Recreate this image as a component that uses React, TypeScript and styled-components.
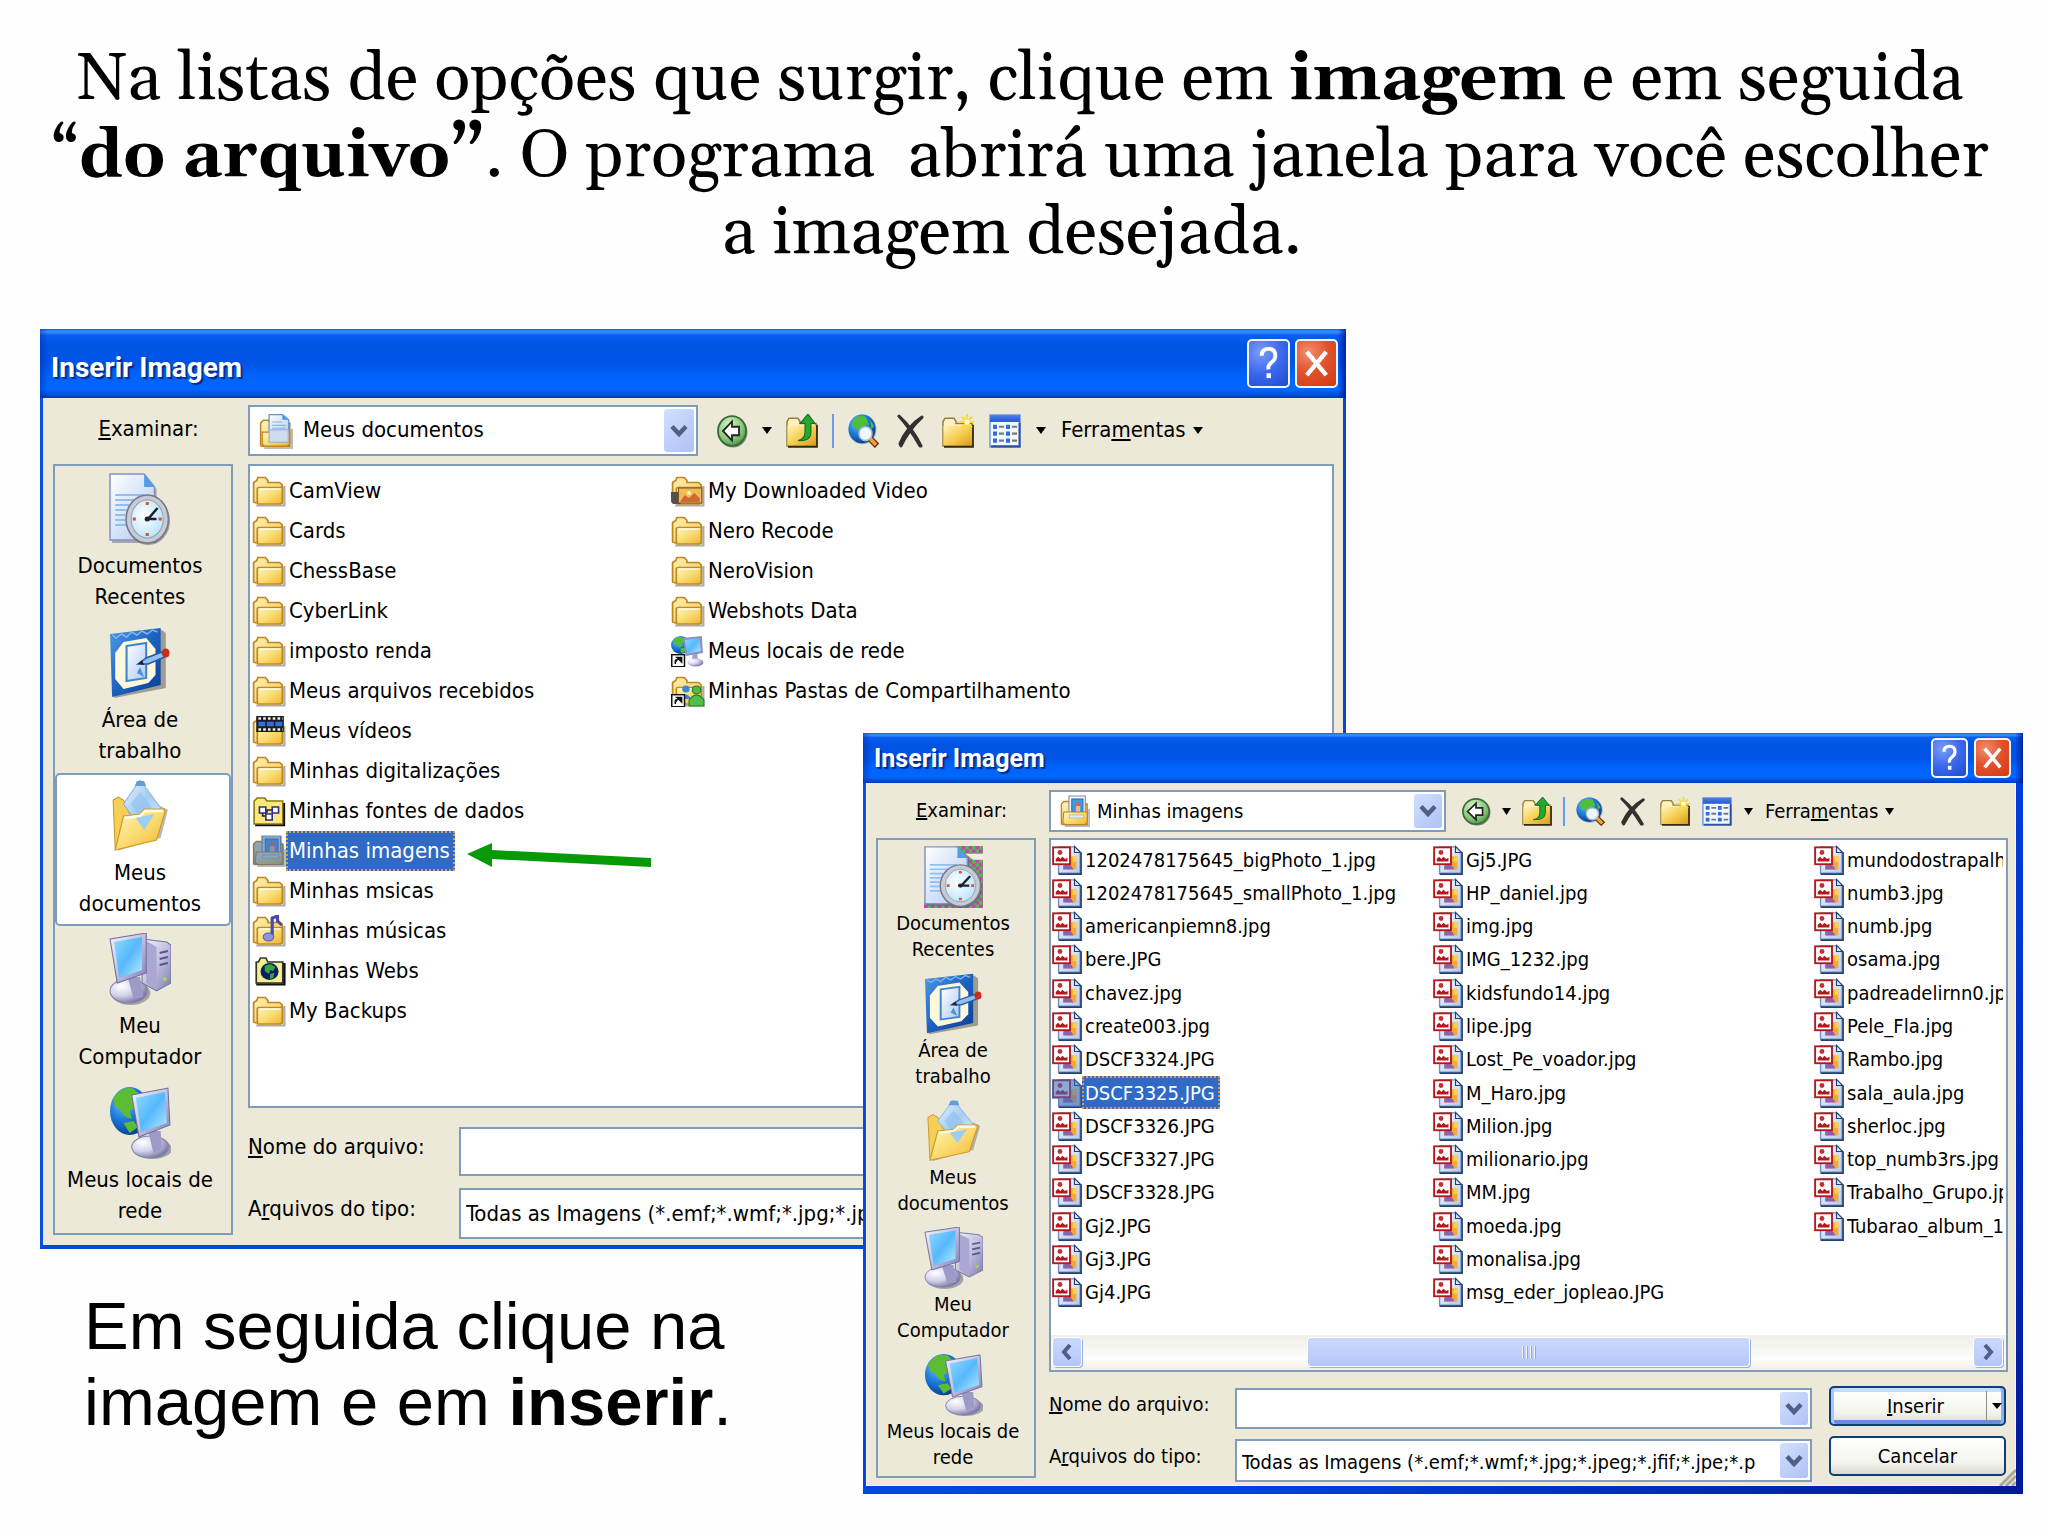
import React, { useId } from 'react';
import styled, { createGlobalStyle, ThemeProvider, css } from 'styled-components';

/* ---------- metrics of the two dialog sizes ---------- */

const large = {
  font: 22, titleFont: 28, titleBar: 69, titlePad: 8, titleLeft: 8,
  capW: 43, capH: 49, capGap: 5, capRight: 5,
  borderRight: 3, borderBottom: 4, edge: '#0a43d6', bottomEdge: '#0844d6',
  bodyPad: '7px 9px 6px 10px', side: 180, colGap: 15, rowGap: 8,
  comboW: 450, comboH: 51, comboIconW: 34, comboIconH: 36, comboTextGap: 10, dropW: 30,
  toolsLeft: 18, toolW: 32, toolH: 34, gapA: 14, gapB: 15, caret: 10,
  placeIconW: 62, placeIconH: 72, placeGap: 5, placeLine: 31,
  listH: 644, listPad: '5px 2px', listRows: 'repeat(14, 40px)', column: 419,
  fileIconW: 34, fileIconH: 32,
  footTop: 19, footLabel: 211, inputH: 49, selectH: 51, footGap: 12, footCol: 20,
  actionsW: 200, buttonH: 47,
};

const compact: typeof large = {
  font: 20, titleFont: 25, titleBar: 50, titlePad: 2, titleLeft: 8,
  capW: 37, capH: 40, capGap: 6, capRight: 5,
  borderRight: 7, borderBottom: 8, edge: '#0038dc', bottomEdge: '#0038dc',
  bodyPad: '7px 8px 4px 10px', side: 160, colGap: 13, rowGap: 6,
  comboW: 397, comboH: 42, comboIconW: 30, comboIconH: 32, comboTextGap: 7, dropW: 28,
  toolsLeft: 15, toolW: 30, toolH: 29, gapA: 11, gapB: 12, caret: 9,
  placeIconW: 59, placeIconH: 62, placeGap: 2, placeLine: 26,
  listH: 534, listPad: '3px 3px 26px 1px', listRows: 'repeat(14, 1fr)', column: 381,
  fileIconW: 30, fileIconH: 30,
  footTop: 16, footLabel: 186, inputH: 41, selectH: 43, footGap: 10, footCol: 17,
  actionsW: 177, buttonH: 40,
};

type Metrics = typeof large;
const m = (pick: (t: Metrics) => string | number) => (p: { theme: any }) => pick(p.theme as Metrics);

const uiFont = '"DejaVu Sans Condensed", "DejaVu Sans", sans-serif';

const Global = createGlobalStyle`
  * { box-sizing: border-box; }
  body { margin: 0; background: #fefefe; color: #000; }
  button, input, select { font: inherit; color: inherit; }
`;

/* ---------- slide ---------- */

const Slide = styled.main`
  padding: 41px 0 71px;
  overflow: hidden;
`;

const Heading = styled.h1`
  margin: 0;
  padding-right: 8px;
  font: 400 67px/77px Gelasio, Georgia, "Liberation Serif", serif;
  text-align: center;
  white-space: nowrap;
`;

const Desktop = styled.div`
  position: relative;
  margin-top: 57px;
`;

const Caption = styled.p`
  margin: 39px 0 0 84px;
  font: 400 67px/76px "Liberation Sans", Arial, sans-serif;
`;

const Pointer = styled.svg`
  position: absolute;
  left: 467px;
  top: 510px;
  width: 184px;
  height: 34px;
`;

/* ---------- dialog frame ---------- */

const Frame = styled.section<{ $front?: boolean }>`
  display: flex;
  flex-direction: column;
  font: 400 ${m(t => t.font)}px/1.2 ${uiFont};
  background: #ece9d8;
  border-style: solid;
  border-width: 0 ${m(t => t.borderRight)}px ${m(t => t.borderBottom)}px 3px;
  border-color: ${m(t => t.edge)} ${m(t => t.edge)} ${m(t => t.bottomEdge)} #0a50dc;
  ${p => p.$front ? css`
    position: absolute;
    top: 404px;
    left: 42.14%;
    width: 56.64%;
    box-shadow: inset -1px -1px 0 #f6f4ea, inset 1px 0 0 #f6f4ea;
    border-image: linear-gradient(135deg, #0a50e6, #0040e4 60%, #00199c) 1;
    border-image-width: 0 7px 8px 3px;
  ` : css`
    margin-left: 40px;
    width: 63.77%;
  `}
`;

const TitleBar = styled.header`
  display: flex;
  align-items: center;
  gap: ${m(t => t.capGap)}px;
  height: ${m(t => t.titleBar)}px;
  margin: 0 -${m(t => t.borderRight)}px 0 -3px;
  padding: 0 ${m(t => t.capRight + t.borderRight)}px 0 ${m(t => t.titleLeft + 3)}px;
  background:
    linear-gradient(90deg, rgba(0, 40, 170, .45), transparent 8px, transparent calc(100% - 8px), rgba(0, 20, 150, .8)),
    linear-gradient(180deg, #0a62e8 0, #3c93ff 4%, #0a5ff0 9%, #0054e3 22%, #0055e6 52%, #0062fb 66%, #0067ff 88%, #0049d8 96%, #0038b8 100%);
`;

const Title = styled.h2`
  flex: 1;
  margin: 0;
  padding-top: ${m(t => t.titlePad)}px;
  font: 700 ${m(t => t.titleFont)}px/1.2 Roboto, "Liberation Sans", sans-serif;
  color: #fff;
  text-shadow: 2px 2px 1px #0a2a8c;
`;

const CaptionButton = styled.button<{ $close?: boolean }>`
  width: ${m(t => t.capW)}px;
  height: ${m(t => t.capH)}px;
  padding: 0;
  border: 2px solid #f2f6ff;
  border-radius: 5px;
  background: ${p => p.$close
    ? 'radial-gradient(circle at 30% 25%, #f0906e, #e2522e 45%, #d23a10 100%)'
    : 'radial-gradient(circle at 30% 25%, #7c9cf8, #3a68ec 50%, #1f4ad0 100%)'};
  svg { display: block; width: 100%; height: 100%; }
`;

const Body = styled.div`
  display: grid;
  grid-template-columns: ${m(t => t.side)}px minmax(0, 1fr);
  column-gap: ${m(t => t.colGap)}px;
  row-gap: ${m(t => t.rowGap)}px;
  padding: ${m(t => t.bodyPad)};
`;

/* ---------- look-in row ---------- */

const LookInLabel = styled.label`
  align-self: center;
  padding: 0 0 3px 11px;
  text-align: center;
`;

const LookInRow = styled.div`
  display: flex;
  align-items: center;
`;

const Field = styled.div<{ $h: 'comboH' | 'inputH' | 'selectH'; $combo?: boolean }>`
  display: flex;
  align-items: center;
  flex: none;
  height: ${p => (p.theme as any)[p.$h]}px;
  ${p => p.$combo && css`width: ${(p.theme as any).comboW}px;`}
  padding: 2px;
  background: #fff;
  border: 2px solid #7f9db9;
`;

const ComboIcon = styled.span`
  display: flex;
  margin: 0 ${m(t => t.comboTextGap)}px 0 7px;
  svg { width: ${m(t => t.comboIconW)}px; height: ${m(t => t.comboIconH)}px; }
`;

const plainControl = css`
  flex: 1;
  min-width: 0;
  height: 100%;
  margin: 0;
  border: 0;
  background: transparent;
  outline: none;
`;

const Select = styled.select<{ $indent?: boolean }>`
  ${plainControl}
  appearance: none;
  padding: ${p => p.$indent ? '2px 0 0 3px' : '0'};
  overflow: hidden;
  white-space: nowrap;
`;

const TextInput = styled.input`
  ${plainControl}
  padding: 0 4px;
`;

const Drop = styled.span`
  display: flex;
  align-items: center;
  justify-content: center;
  flex: none;
  width: ${m(t => t.dropW)}px;
  height: 100%;
  border-radius: 3px;
  background: linear-gradient(135deg, #d3dffd, #bccdfa 60%, #afc2f2);
  pointer-events: none;
  svg { width: 18px; height: 16px; }
`;

const Tools = styled.div`
  display: flex;
  align-items: center;
  gap: ${m(t => t.gapA)}px;
  padding-left: ${m(t => t.toolsLeft)}px;
`;

const ToolGroup = styled.div`
  display: flex;
  align-items: center;
  gap: ${m(t => t.gapB)}px;
`;

const Tool = styled.button`
  display: flex;
  padding: 0;
  border: 0;
  background: none;
  svg { width: ${m(t => t.toolW)}px; height: ${m(t => t.toolH)}px; }
`;

const CaretButton = styled.button`
  display: flex;
  padding: 0;
  border: 0;
  background: none;
  svg { width: ${m(t => t.caret)}px; height: 7px; }
`;

const MenuButton = styled.button`
  display: flex;
  align-items: center;
  gap: 7px;
  padding: 0;
  border: 0;
  background: none;
  svg { width: ${m(t => t.caret)}px; height: 7px; }
`;

const Separator = styled.span`
  width: 2px;
  height: ${m(t => t.toolH)}px;
  background: #6a9be8;
`;

/* ---------- places ---------- */

const Places = styled.nav`
  display: flex;
  flex-direction: column;
  margin-bottom: 4px;
  border: 2px solid #7f9db9;
  font-size: ${m(t => t.font)}px;
`;

const Place = styled.button<{ $active?: boolean }>`
  display: flex;
  flex: 1;
  flex-direction: column;
  align-items: center;
  justify-content: center;
  gap: ${m(t => t.placeGap)}px;
  min-height: 0;
  padding: 0 6px 0 0;
  border: 2px solid ${p => p.$active ? '#7f9db9' : 'transparent'};
  border-radius: 5px;
  background: ${p => p.$active ? '#fff' : 'none'};
  line-height: ${m(t => t.placeLine)}px;
  white-space: pre;
  svg { width: ${m(t => t.placeIconW)}px; height: ${m(t => t.placeIconH)}px; }
`;

/* ---------- file list ---------- */

const Main = styled.div`
  display: flex;
  flex-direction: column;
  min-width: 0;
`;

const ListBox = styled.div`
  display: flex;
  flex-direction: column;
  height: ${m(t => t.listH)}px;
  border: 2px solid #7f9db9;
  background: #fff;
`;

const ListView = styled.div`
  flex: 1;
  min-height: 0;
  padding: ${m(t => t.listPad)};
`;

const Files = styled.ul`
  display: grid;
  grid-auto-flow: column;
  grid-template-rows: ${m(t => t.listRows)};
  grid-auto-columns: ${m(t => t.column)}px;
  height: 100%;
  margin: 0;
  padding: 0;
  overflow: hidden;
  list-style: none;
`;

const FileItem = styled.li`
  display: flex;
  min-height: 0;
`;

const FileButton = styled.button`
  display: flex;
  align-items: center;
  padding: 0;
  border: 0;
  background: none;
  white-space: nowrap;
  svg { flex: none; width: ${m(t => t.fileIconW)}px; height: ${m(t => t.fileIconH)}px; }
`;

const FileName = styled.span<{ $on?: boolean }>`
  display: flex;
  align-items: center;
  height: 100%;
  padding: 0 5px 0 3px;
  ${p => p.$on && css`
    color: #fff;
    background: #316ac5;
    outline: 2px dotted #d09a5a;
    outline-offset: -2px;
  `}
`;

/* ---------- scroll bar ---------- */

const ScrollBar = styled.div`
  display: grid;
  grid-template-columns: 30px 225fr 443fr 223fr 30px;
  align-items: center;
  height: 35px;
  padding: 0 3px 1px 1px;
  background: linear-gradient(180deg, #f0eee8, #fdfdfa 70%, #f1efe6);
`;

const scrollPart = css`
  display: flex;
  align-items: center;
  justify-content: center;
  height: 30px;
  padding: 0;
  border: 1px solid #fff;
  border-radius: 4px;
  background: linear-gradient(180deg, #cbd8fd, #bccdfb 70%, #b3c6f6);
  box-shadow: 1px 1px 0 #98b0e0;
`;

const ScrollButton = styled.button`
  ${scrollPart}
  svg { width: 16px; height: 18px; }
`;

const Thumb = styled.span`
  ${scrollPart}
  grid-column: 3;
  gap: 2px;
`;

const Grip = styled.i`
  width: 2px;
  height: 13px;
  background: #eef3ff;
  border-right: 1px solid #8fabe6;
`;

/* ---------- footer ---------- */

const Footer = styled.div`
  display: flex;
  gap: ${m(t => t.footCol)}px;
  margin-top: ${m(t => t.footTop)}px;
`;

const Fields = styled.div`
  display: grid;
  flex: 1;
  grid-template-columns: ${m(t => t.footLabel)}px minmax(0, 1fr);
  row-gap: ${m(t => t.footGap)}px;
  min-width: 0;
`;

const FieldLabel = styled.label`
  align-self: center;
  padding-bottom: 9px;
`;

const Actions = styled.div`
  display: flex;
  flex-direction: column;
  gap: ${m(t => t.footGap)}px;
  width: ${m(t => t.actionsW)}px;
  margin: -2px 2px 0 0;
`;

const Action = styled.button<{ $primary?: boolean }>`
  display: flex;
  align-items: center;
  justify-content: center;
  flex: none;
  height: ${m(t => t.buttonH)}px;
  padding: 0;
  border: 2px solid #0c3f7c;
  border-radius: 5px;
  background: linear-gradient(180deg, #fff, #f3f3ee 70%, #dcd9cc);
  ${p => p.$primary && css`box-shadow: inset 3px 0 0 #a9c6f6, inset -3px 0 0 #8fb0f0, inset 0 4px 0 #c6dcff, inset 0 -4px 0 #6a8be0;`}
`;

const ActionText = styled.span`
  flex: 1;
  padding-left: 14px;
`;

const Split = styled.span`
  display: flex;
  align-items: center;
  height: 30px;
  padding: 0 2px 0 5px;
  border-left: 1px solid #8c8c84;
  svg { width: 10px; height: 6px; }
`;

const SizeGrip = styled.svg`
  position: absolute;
  right: 0;
  bottom: 0;
  width: 17px;
  height: 17px;
`;

/* ---------- drawings ---------- */

const Defs = styled.svg`
  position: absolute;
  width: 0;
  height: 0;
`;

const Gradient = ({ id, stops, flat }: { id: string; stops: string[]; flat?: boolean }) => (
  <linearGradient id={id} x1="0" y1="0" x2={flat ? '0' : '1'} y2="1">
    {stops.map((c, i) => <stop key={i} offset={i / (stops.length - 1)} stopColor={c} />)}
  </linearGradient>
);

const SharedDefs = () => (
  <Defs aria-hidden="true">
    <defs>
      <Gradient id="gold" stops={['#fff6c4', '#fbdc72', '#eeb62e']} />
      <Gradient id="goldBack" stops={['#fff1b0', '#f2c754']} />
      <Gradient id="toolGold" stops={['#fff3b8', '#f6cf52', '#d99a1a']} />
      <Gradient id="paper" stops={['#ffffff', '#d6e4fa', '#b4c8ee']} />
      <Gradient id="screen" stops={['#8fdcff', '#56b8fb', '#b8ecff']} />
      <Gradient id="metal" stops={['#f4f3fb', '#c3c1e2', '#7f7cb0']} />
      <Gradient id="blueFrame" stops={['#4f9ae8', '#1c62c0', '#0a3d94']} />
      <Gradient id="diamond" stops={['#eaf5ff', '#a6cdf2', '#d8ecff']} />
      <Gradient id="viewHead" stops={['#4a80e8', '#2a58c8']} flat />
      <radialGradient id="globe" cx=".35" cy=".3" r=".8"><stop offset="0" stopColor="#6cc0ff" /><stop offset=".5" stopColor="#1a78d8" /><stop offset="1" stopColor="#05357e" /></radialGradient>
      <radialGradient id="greenBall" cx=".4" cy=".3" r=".8"><stop offset="0" stopColor="#d8f5c8" /><stop offset=".6" stopColor="#86c878" /><stop offset="1" stopColor="#3c8238" /></radialGradient>
      <radialGradient id="dial" cx=".4" cy=".4" r=".7"><stop offset="0" stopColor="#ffffff" /><stop offset="1" stopColor="#b4e2fa" /></radialGradient>
      <radialGradient id="base" cx=".3" cy=".3" r=".8"><stop offset="0" stopColor="#ffffff" /><stop offset=".5" stopColor="#d2d1ea" /><stop offset="1" stopColor="#6c699c" /></radialGradient>
    </defs>
  </Defs>
);

const Art = ({ box = '0 0 32 32', children }: { box?: string; children: React.ReactNode }) => (
  <svg viewBox={box} preserveAspectRatio="none" aria-hidden="true">{children}</svg>
);

const FolderShape = () => (
  <>
    <path d="M4 30.5H30.5V11" fill="none" stroke="#6e6558" strokeOpacity=".55" strokeWidth="2" />
    <path d="M1.500 27V7.500L4.500 5.500 5.500 2.500H12.500L15 5.500V7.500H26L28.500 10V28H4Z" fill="url(#goldBack)" stroke="#bd8620" strokeWidth="1.600" />
    <path d="M6 12.500H28.500V27.500L27 29H6L5 27.500V13.500Z" fill="url(#gold)" stroke="#c08a22" strokeWidth="1.600" />
    <path d="M7 14H27" stroke="#fffbe0" strokeWidth="1.500" />
  </>
);

const Shortcut = () => (
  <>
    <rect x=".7" y="19.700" width="12" height="12" fill="#fff" stroke="#111" strokeWidth="1.400" />
    <path d="M4 29V26.500Q4 24.500 6.500 24.500M5.500 22.500H10V27Z" fill="#111" stroke="#111" strokeWidth="1.400" />
  </>
);

const DocsFolder = ({ picture, tinted }: { picture?: boolean; tinted?: boolean }) => (
  <Art>
    <path d="M5 31H31V14" fill="none" stroke="#777" strokeOpacity=".5" strokeWidth="2" />
    <path d="M1.500 29V9L4 6.500H9L11 9H29V29.500H3Z" fill="url(#gold)" stroke="#b98322" strokeWidth="1.400" />
    {picture ? (
      <>
        <path d="M9.500 1H27V22H9.500Z" fill="#f4f7fc" stroke="#7d8fa8" strokeWidth="1.200" />
        <rect x="12.500" y="4" width="12" height="13" fill="#3b9be6" stroke="#2468b0" />
        <circle cx="19" cy="9.500" r="2.500" fill="#e0604a" /><rect x="17" y="11" width="4.500" height="6" fill="#f3b4a0" />
      </>
    ) : (
      <>
        <path d="M9.500 1.500H22L28 6V22H9.500Z" fill="url(#paper)" stroke="#5f94d0" strokeWidth="1.200" />
        <path d="M22 1.500V6H28Z" fill="#3a9af0" /><path d="M12 8H22M12 11H25M12 13.500H25" stroke="#86b4ea" />
      </>
    )}
    {picture ? (
      <path d="M4 17H29V27.500L27 29.500H5L3 27.500Z" fill="url(#gold)" stroke="#b98322" strokeWidth="1.200" />
    ) : (
      <>
        <path d="M3 17H29V27.500L27 29.500H5L3 27.500Z" fill="url(#gold)" stroke="#b98322" strokeWidth="1.200" />
        <rect x="9.500" y="15" width="18" height="11" fill="#cfdcee" stroke="#9aaecb" />
      </>
    )}
    {picture && <rect x="10" y="20" width="15" height="3" fill="#e3edfa" stroke="#8aa" strokeWidth=".6" />}
    {tinted && <path d="M1 29V9L4 6.500H9V1H28V9H30V30H3Z" fill="#4a74b0" fillOpacity=".6" />}
  </Art>
);

const Globe = ({ x, y, r }: { x: number; y: number; r: number }) => (
  <g transform={`translate(${x} ${y}) scale(${r / 10})`}>
    <circle r="10" fill="url(#globe)" />
    <path d="M-5-8Q0-10 3-8L5-3 1-2 2 1-1 3-3 0-7-1-7-5ZM0 4 4 3 6 5 3 9 0 8ZM6-6 9-2 7 0Z" fill="#4fbf3a" />
  </g>
);

const fileIcons = {
  folder: () => <Art><FolderShape /></Art>,
  docs: () => <DocsFolder />,
  pictures: ({ tinted }: { tinted?: boolean }) => <DocsFolder picture tinted={tinted} />,
  video: () => (
    <Art>
      <FolderShape />
      <rect x="4" y="1" width="26" height="16" fill="#1c1c22" />
      <path d="M6 3.500H29M6 14.500H29" stroke="#f3efdc" strokeWidth="2.500" strokeDasharray="2.500 2" />
      <path d="M6 9H29" stroke="#2f6fe0" strokeWidth="4.500" strokeDasharray="6.500 1.500" />
    </Art>
  ),
  camera: () => (
    <Art>
      <FolderShape />
      <path d="M0 17H7L9 14V29H3Q0 29 0 25Z" fill="#54504c" />
      <rect x="7" y="13" width="22" height="15" fill="#f0bc58" stroke="#7a5420" />
      <path d="M9 26 13 20 17 23 22 18 27 23V27H9Z" fill="#d06a34" /><circle cx="17" cy="18" r="2" fill="#fff0b0" />
    </Art>
  ),
  data: () => (
    <Art>
      <path d="M2 29V6L5 3H12L14 6H29V29Z" fill="#fbe878" stroke="#8a7a10" strokeWidth="1.500" />
      <path d="M3 30.300H30.300V8" fill="none" stroke="#111" strokeWidth="1.800" />
      <path d="M10 15V21H16M20 15H14V18" fill="none" stroke="#222" strokeWidth="1.500" />
      <rect x="7" y="12" width="6" height="6" fill="#fff" stroke="#2b2b90" strokeWidth="1.500" /><rect x="19" y="12" width="6" height="6" fill="#fff" stroke="#2b2b90" strokeWidth="1.500" /><rect x="13" y="19" width="6" height="6" fill="#fff" stroke="#2b2b90" strokeWidth="1.500" />
    </Art>
  ),
  music: () => (
    <Art>
      <FolderShape />
      <path d="M19 22V3L24 1V6L28 10" fill="none" stroke="#4a4aa8" strokeWidth="3" />
      <ellipse cx="15.500" cy="22" rx="5" ry="4" fill="#8f92e0" stroke="#5a5ab4" />
    </Art>
  ),
  web: () => (
    <Art>
      <path d="M4 28V7H6L8 3H13L15 7H29V28Z" fill="#f2f08a" stroke="#333" strokeWidth="1.600" />
      <path d="M4 29.500H30.500V8" fill="none" stroke="#111" strokeWidth="2.200" />
      <circle cx="16.500" cy="16.500" r="8.500" fill="#0a1c6c" />
      <path d="M12 11 17 9 22 12 20 16 17 15 16 19 12 16ZM17 19 21 18 20 23 17 24Z" fill="#35a83a" />
    </Art>
  ),
  network: () => (
    <Art>
      <Globe x={9} y={10} r={9} />
      <path d="M11 3 29 1 30 18 14 21Z" fill="#8f8cc0" /><path d="M13 5 27 3 28 16 15 19Z" fill="url(#screen)" />
      <path d="M20 19H25V25H20Z" fill="#a3a0cc" /><ellipse cx="23" cy="27.500" rx="7.500" ry="4" fill="url(#base)" />
      <Shortcut />
    </Art>
  ),
  shared: () => (
    <Art>
      <FolderShape />
      <circle cx="14" cy="14" r="3.500" fill="#3a86dc" /><path d="M9 24Q14 15 19 24Z" fill="#3a86dc" />
      <circle cx="24" cy="15" r="4" fill="#52b848" stroke="#1c7a1c" /><path d="M17 31V25Q24 15 31 25V31Z" fill="#52c048" stroke="#1c7a1c" />
      <Shortcut />
    </Art>
  ),
  image: ({ tinted }: { tinted?: boolean }) => (
    <Art>
      <path d="M7 2H24L30 8V30H7Z" fill="url(#paper)" stroke="#6f8fc4" strokeWidth="1.500" />
      <path d="M31 8V31H7" fill="none" stroke="#23406e" strokeWidth="1.800" />
      <path d="M24 1.500V8H30.500Z" fill="#dce8fb" stroke="#23406e" strokeWidth="1.200" />
      <rect x="12" y="12" width="14" height="14" fill="#f6a836" /><path d="M12 26V22L17 20 21 23 23 26Z" fill="#8a62b4" /><path d="M22 12H26V18H22Z" fill="#ffd24a" />
      <rect x="1.200" y="2.500" width="18" height="18" fill="#fff" stroke="#b3181c" strokeWidth="2" />
      <circle cx="8.500" cy="8" r="2.600" fill="#c03034" />
      <path d="M4 17.500V15L6.500 12.500 9 15 11 12.500 14 15 16.500 13.500V17.500Z" fill="#b3181c" />
      {tinted && <path d="M0 1.500H24L31 8V31H7V22.500H0Z" fill="#3f6db8" fillOpacity=".58" />}
    </Art>
  ),
};

type FileIcon = keyof typeof fileIcons;

const placeIcons = {
  recent: ({ checker }: { checker?: boolean }) => {
    const id = useId();
    return (
      <Art box="0 0 60 72">
        {checker && (
          <>
            <pattern id={id} width="7" height="8" patternUnits="userSpaceOnUse">
              <rect width="7" height="8" fill="#d834c8" /><path d="M0 0H3.500V4H0ZM3.500 4H7V8H3.500Z" fill="#3ccc38" />
            </pattern>
            <path d="M32 0H60V72H0V64H32Z" fill={`url(#${id})`} />
            <path d="M42 9H60V16H50Z" fill="#f2f0e4" />
          </>
        )}
        <path d="M3 3H36L46 16V70H3Z" fill="#55587c" fillOpacity=".45" />
        <path d="M1 1H34L44 14V67H1Z" fill="url(#paper)" stroke="#8890c4" strokeWidth="1.500" />
        <path d="M34 1V14H44Z" fill="#4f9ee6" />
        <path d="M6 22H34M6 27H26M6 32H20M6 37H17M6 42H16M6 47H16M6 52H17" stroke="#90bff0" strokeWidth="2" />
        <ellipse cx="38" cy="48" rx="21" ry="24" fill="#55555f" fillOpacity=".55" />
        <ellipse cx="37" cy="46" rx="20.500" ry="24" fill="#c8cad4" stroke="#74788a" strokeWidth="1.500" />
        <ellipse cx="37" cy="46" rx="15.500" ry="19" fill="url(#dial)" stroke="#8aa4b8" />
        <path d="M37 29V32M37 60V63M23 46H26M48 46H51" stroke="#e0552c" strokeWidth="3" />
        <path d="M37 47 47 35M36 46H46" stroke="#1c2430" strokeWidth="2.500" /><circle cx="37" cy="46" r="2.500" fill="#1c2430" />
      </Art>
    );
  },
  desktop: () => (
    <Art box="0 0 60 72">
      <path d="M5 71 55 61V6L51 3 3 10Z" fill="#44403a" fillOpacity=".45" />
      <path d="M1 7 50 1V58L3 70Z" fill="url(#blueFrame)" />
      <path d="M3 8 7 11 12 7 17 10 22 5 27 8 32 4 37 7 42 3 47 5" fill="none" stroke="#7fb4ec" strokeWidth="1.500" />
      <path d="M14 15 36 11 45 22V48L38 56 14 62 6 52V26Z" fill="#fff8dc" />
      <path d="M17 19 36 16V51L17 54Z" fill="url(#paper)" stroke="#3f86d0" strokeWidth="2" />
      <path d="M28 37 36 31 51 25 54 30 38 37Z" fill="#8fc0f0" stroke="#2458a4" strokeWidth="1.500" />
      <path d="M28 37 34 38 32 33Z" fill="#222" /><ellipse cx="55" cy="26" rx="3.500" ry="4.500" fill="#cc2c1c" />
      <path d="M30 40 34 50 27 46Z" fill="#4d94dc" />
    </Art>
  ),
  documents: () => (
    <Art box="0 0 60 72">
      <path d="M8 71 50 58 57 30 50 26Z" fill="#555" fillOpacity=".4" />
      <path d="M4 20 9 17 14 20 20 34 38 38V60L6 68Z" fill="#f5cf58" stroke="#c9962a" />
      <path d="M30 0 50 28 30 48 14 24Z" fill="url(#diamond)" stroke="#86b2dc" />
      <path d="M27 1H34L36 6H25Z" fill="#5f9ede" /><path d="M30 12 41 27 30 38 21 24Z" fill="#8fc0ee" fillOpacity=".6" />
      <path d="M14 36 30 34 34 29 54 29V33L46 60 6 70Z" fill="url(#gold)" stroke="#d09a26" strokeWidth="1.200" />
      <path d="M15 38 30 36 35 31 52 31" stroke="#fffbe6" strokeWidth="2.500" fill="none" />
      <path d="M26 38 44 34 34 50Z" fill="#9ccdf4" />
    </Art>
  ),
  computer: () => (
    <Art box="0 0 60 72">
      <path d="M32 6 56 9 60 12V50L46 58 32 50Z" fill="url(#metal)" stroke="#76739f" />
      <path d="M36 8V50L46 57V14Z" fill="#aaa7d2" /><path d="M49 20 57 18M49 26 57 24M49 32 57 30" stroke="#5a5788" strokeWidth="2" /><circle cx="54" cy="46" r="2" fill="#9fd848" />
      <ellipse cx="21" cy="60" rx="19" ry="12" fill="#3b3a55" fillOpacity=".4" />
      <ellipse cx="19" cy="58" rx="18" ry="12" fill="url(#base)" stroke="#8583aa" />
      <path d="M18 44H30L33 64 24 66Z" fill="#9d9ac8" />
      <path d="M1 6 36 0V40L8 50Z" fill="url(#metal)" stroke="#6f6c9c" />
      <path d="M5 9 32 4V37L10 45Z" fill="url(#screen)" />
    </Art>
  ),
  network: () => (
    <Art box="0 0 60 72">
      <ellipse cx="20" cy="24" rx="19" ry="24" fill="url(#globe)" />
      <path d="M8 6Q16-1 24 2L30 8 24 14 26 20 20 24 22 32 16 30 10 22 6 20 4 12ZM14 36 24 34 28 40 20 46Z" fill="#5cbc34" />
      <ellipse cx="42" cy="62" rx="19" ry="10" fill="#3b3a55" fillOpacity=".4" />
      <ellipse cx="40" cy="60" rx="18" ry="11" fill="url(#base)" stroke="#8583aa" />
      <path d="M38 44H50L51 62 43 66Z" fill="#9d9ac8" />
      <path d="M22 8 57 1 59 38 29 50Z" fill="url(#metal)" stroke="#6f6c9c" />
      <path d="M26 11 54 5 56 36 31 45Z" fill="url(#screen)" />
    </Art>
  ),
};

type PlaceIcon = keyof typeof placeIcons;

const BackIcon = () => (
  <Art>
    <ellipse cx="17" cy="17" rx="14.500" ry="14.500" fill="#4a4a40" fillOpacity=".6" />
    <circle cx="16" cy="16" r="14" fill="url(#greenBall)" stroke="#3d6a3a" strokeWidth="1.800" />
    <path d="M7 16 16 7V12H23V20H16V25Z" fill="#fff" stroke="#222" strokeWidth="1.800" />
  </Art>
);
const ToolFolder = () => (
  <>
    <path d="M1 30V7L3 4H12L14 7V9H30V30Z" fill="#fff2be" stroke="#94803e" strokeWidth="1.500" />
    <path d="M1.500 11H30V30H1.500Z" fill="url(#toolGold)" />
    <path d="M2 30.800H31V10" fill="none" stroke="#33280e" strokeWidth="1.800" />
  </>
);
const UpIcon = () => (
  <Art><ToolFolder /><path d="M12 25Q19 24 19 17V9H14L22 0 29 9H25V17Q25 26 12 25Z" fill="#22a82e" stroke="#0d6c18" /></Art>
);
const SearchWebIcon = () => (
  <Art>
    <circle cx="14.500" cy="14.500" r="14" fill="#88a" fillOpacity=".6" /><Globe x={14} y={14} r={13.5} />
    <path d="M22 23 29 30" stroke="#5c3408" strokeWidth="6" /><path d="M22 23 28 29" stroke="#f0a040" strokeWidth="3.500" />
    <circle cx="17.500" cy="18.500" r="6.500" fill="#eef6ff" stroke="#a9bcd8" strokeWidth="1.500" />
  </Art>
);
const DeleteIcon = () => (
  <Art><path d="M4 2Q14 12 25 30L26 30Q18 14 4 2ZM27 3Q14 14 6 30L5 28Q12 12 27 3Z" fill="#33302e" stroke="#33302e" strokeWidth="3" strokeLinejoin="round" /></Art>
);
const NewFolderIcon = () => (
  <Art><ToolFolder /><path d="M25 0V15M17.500 7.500H32M20 2.500 30 12.500M30 2.500 20 12.500" stroke="#fbd93c" strokeWidth="2" /><circle cx="25" cy="7.500" r="2.500" fill="#fffbd8" /></Art>
);
const ViewsIcon = () => (
  <Art>
    <rect x="1" y="1" width="30" height="30" fill="#f3f7ff" stroke="#6f98e0" strokeWidth="1.500" />
    <rect x="1" y="1" width="30" height="6.500" fill="url(#viewHead)" />
    <path d="M2 30.500H30.500V8" fill="none" stroke="#2a4f9c" strokeWidth="2" />
    {[10, 16.5, 23].map(y => <path key={y} d={`M4 ${y}h4v4h-4zM17 ${y}h4v4h-4z`} fill="#2f6ce0" />)}
    {[11, 17.5, 24].map(y => <path key={y} d={`M10 ${y}h5v2h-5zM23 ${y}h5v2h-5z`} fill="#777" />)}
  </Art>
);
const Caret = () => <Art box="0 0 10 7"><path d="M0 0H10L5 7Z" /></Art>;
const Chevron = () => <svg viewBox="0 0 18 16" aria-hidden="true"><path d="M2 3.500 9 11 16 3.500" fill="none" stroke="#4d6185" strokeWidth="4.500" /></svg>;
const SideChevron = ({ right }: { right?: boolean }) => (
  <svg viewBox="0 0 16 18" aria-hidden="true"><path d={right ? 'M5 2 11 9 5 16' : 'M11 2 5 9 11 16'} fill="none" stroke="#4d6185" strokeWidth="4" /></svg>
);

/* ---------- data ---------- */

type Entry = { name: string; icon: FileIcon };
const entry = (name: string, icon: FileIcon = 'folder'): Entry => ({ name, icon });

const documents: Entry[] = [
  entry('CamView'), entry('Cards'), entry('ChessBase'), entry('CyberLink'), entry('imposto renda'),
  entry('Meus arquivos recebidos'), entry('Meus vídeos', 'video'), entry('Minhas digitalizações'),
  entry('Minhas fontes de dados', 'data'), entry('Minhas imagens', 'pictures'), entry('Minhas msicas'),
  entry('Minhas músicas', 'music'), entry('Minhas Webs', 'web'), entry('My Backups'),
  entry('My Downloaded Video', 'camera'), entry('Nero Recode'), entry('NeroVision'), entry('Webshots Data'),
  entry('Meus locais de rede', 'network'), entry('Minhas Pastas de Compartilhamento', 'shared'),
];

const images: Entry[] = [
  '1202478175645_bigPhoto_1.jpg', '1202478175645_smallPhoto_1.jpg', 'americanpiemn8.jpg', 'bere.JPG', 'chavez.jpg',
  'create003.jpg', 'DSCF3324.JPG', 'DSCF3325.JPG', 'DSCF3326.JPG', 'DSCF3327.JPG', 'DSCF3328.JPG', 'Gj2.JPG',
  'Gj3.JPG', 'Gj4.JPG', 'Gj5.JPG', 'HP_daniel.jpg', 'img.jpg', 'IMG_1232.jpg', 'kidsfundo14.jpg', 'lipe.jpg',
  'Lost_Pe_voador.jpg', 'M_Haro.jpg', 'Milion.jpg', 'milionario.jpg', 'MM.jpg', 'moeda.jpg', 'monalisa.jpg',
  'msg_eder_jopleao.JPG', 'mundodostrapalho', 'numb3.jpg', 'numb.jpg', 'osama.jpg', 'padreadelirnn0.jp',
  'Pele_Fla.jpg', 'Rambo.jpg', 'sala_aula.jpg', 'sherloc.jpg', 'top_numb3rs.jpg', 'Trabalho_Grupo.jp',
  'Tubarao_album_1',
].map(name => entry(name, 'image'));

const places: { label: string; icon: PlaceIcon }[] = [
  { label: 'Documentos\nRecentes', icon: 'recent' },
  { label: 'Área de\ntrabalho', icon: 'desktop' },
  { label: 'Meus\ndocumentos', icon: 'documents' },
  { label: 'Meu\nComputador', icon: 'computer' },
  { label: 'Meus locais de\nrede', icon: 'network' },
];

const fileTypes = 'Todas as Imagens (*.emf;*.wmf;*.jpg;*.jpeg;*.jfif;*.jpe;*.p';

/* ---------- dialog ---------- */

type DialogProps = {
  metrics: Metrics; folder: string; folderIcon: FileIcon; entries: Entry[]; selected: string;
  activePlace?: PlaceIcon; front?: boolean;
};

const Dialog = ({ metrics, folder, folderIcon, entries, selected, activePlace, front }: DialogProps) => {
  const id = useId();
  const FolderIcon = fileIcons[folderIcon];
  return (
    <ThemeProvider theme={metrics}>
      <Frame $front={front} aria-labelledby={`${id}-title`}>
        <TitleBar>
          <Title id={`${id}-title`}>Inserir Imagem</Title>
          <CaptionButton aria-label="Ajuda">
            <svg viewBox="0 0 40 46" aria-hidden="true"><path d="M13 15Q13 8 20 8T27 15Q27 19 23 22T20 29" fill="none" stroke="#fff" strokeWidth="4" /><rect x="18" y="33" width="4.500" height="5" fill="#fff" /></svg>
          </CaptionButton>
          <CaptionButton $close aria-label="Fechar">
            <svg viewBox="0 0 40 46" aria-hidden="true"><path d="M10 11 30 35M30 11 10 35" stroke="#fff" strokeWidth="4.500" /></svg>
          </CaptionButton>
        </TitleBar>
        <Body>
          <LookInLabel htmlFor={`${id}-look`}><u>E</u>xaminar:</LookInLabel>
          <LookInRow>
            <Field $h="comboH" $combo>
              <ComboIcon><FolderIcon /></ComboIcon>
              <Select id={`${id}-look`}><option>{folder}</option></Select>
              <Drop><Chevron /></Drop>
            </Field>
            <Tools>
              <Tool aria-label="Voltar"><BackIcon /></Tool>
              <CaretButton aria-label="Histórico"><Caret /></CaretButton>
              <Tool aria-label="Um nível acima"><UpIcon /></Tool>
              <Separator />
              <ToolGroup>
                <Tool aria-label="Pesquisar na Web"><SearchWebIcon /></Tool>
                <Tool aria-label="Excluir"><DeleteIcon /></Tool>
                <Tool aria-label="Criar nova pasta"><NewFolderIcon /></Tool>
                <Tool aria-label="Modos de exibição"><ViewsIcon /></Tool>
                <CaretButton aria-label="Escolher exibição"><Caret /></CaretButton>
                <MenuButton><span>Ferra<u>m</u>entas</span><Caret /></MenuButton>
              </ToolGroup>
            </Tools>
          </LookInRow>
          <Places>
            {places.map(p => {
              const Icon = placeIcons[p.icon];
              return <Place key={p.icon} $active={p.icon === activePlace}><Icon checker={front} />{p.label}</Place>;
            })}
          </Places>
          <Main>
            <ListBox>
              <ListView>
                <Files>
                  {entries.map(e => {
                    const Icon = fileIcons[e.icon];
                    const on = e.name === selected;
                    return (
                      <FileItem key={e.name}>
                        <FileButton><Icon tinted={on} /><FileName $on={on}>{e.name}</FileName></FileButton>
                      </FileItem>
                    );
                  })}
                </Files>
              </ListView>
              {front && (
                <ScrollBar>
                  <ScrollButton aria-label="Rolar para a esquerda"><SideChevron /></ScrollButton>
                  <Thumb><Grip /><Grip /><Grip /><Grip /></Thumb>
                  <span />
                  <ScrollButton aria-label="Rolar para a direita"><SideChevron right /></ScrollButton>
                </ScrollBar>
              )}
            </ListBox>
            <Footer>
              <Fields>
                <FieldLabel htmlFor={`${id}-name`}><u>N</u>ome do arquivo:</FieldLabel>
                <Field $h="inputH"><TextInput id={`${id}-name`} /><Drop><Chevron /></Drop></Field>
                <FieldLabel htmlFor={`${id}-type`}>A<u>r</u>quivos do tipo:</FieldLabel>
                <Field $h="selectH">
                  <Select id={`${id}-type`} $indent><option>{fileTypes}</option></Select><Drop><Chevron /></Drop>
                </Field>
              </Fields>
              <Actions>
                <Action $primary><ActionText><u>I</u>nserir</ActionText><Split><Caret /></Split></Action>
                <Action>Cancelar</Action>
              </Actions>
            </Footer>
          </Main>
        </Body>
        {front && (
          <SizeGrip viewBox="0 0 17 17" aria-hidden="true">
            <path d="M1 17 17 1M7 17 17 7M13 17 17 13" stroke="#aca899" strokeWidth="3" />
          </SizeGrip>
        )}
      </Frame>
    </ThemeProvider>
  );
};

export default function App() {
  return (
    <Slide>
      <Global />
      <SharedDefs />
      <Heading>
        Na listas de opções que surgir, clique em <b>imagem</b> e em seguida<br />
        “<b>do arquivo”</b>. O programa&nbsp; abrirá uma janela para você escolher<br />
        a imagem desejada.&nbsp;
      </Heading>
      <Desktop>
        <Dialog metrics={large} folder="Meus documentos" folderIcon="docs" entries={documents} selected="Minhas imagens" activePlace="documents" />
        <Pointer viewBox="0 0 184 34" aria-hidden="true">
          <path d="M0 15 25 4V11L184 19V28L25 20V28Z" fill="#069a06" />
        </Pointer>
        <Dialog metrics={compact} folder="Minhas imagens" folderIcon="pictures" entries={images} selected="DSCF3325.JPG" front />
      </Desktop>
      <Caption>
        Em seguida clique na<br />
        imagem e em <b>inserir</b>.
      </Caption>
    </Slide>
  );
}
